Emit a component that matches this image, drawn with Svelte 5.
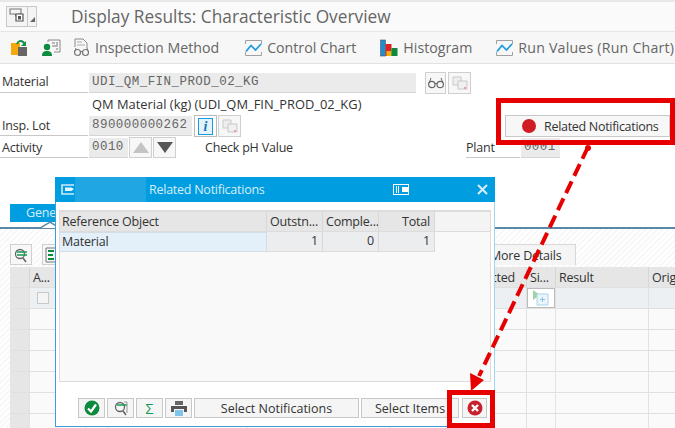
<script lang="ts">
  const columns = [
    { label: "", w: 20 },
    { label: "A...", w: 28 },
    { label: "", w: 28 },
    { label: "", w: 22 },
    { label: "", w: 140 },
    { label: "", w: 142 },
    { label: "Expected", w: 137, right: true },
    { label: "Si...", w: 29 },
    { label: "Result", w: 93 },
    { label: "Original", w: 60 }
  ];
  const rows = [0, 1, 2, 3, 4, 5, 6];
</script>

{#snippet chart()}
  <svg class="ico" width="17" height="16" viewBox="0 0 17 16" aria-hidden="true">
    <path d="M0.5 4V0.5h16V4M0.5 12v3.5h16V12" fill="none" stroke="#a0a0a0" />
    <path d="M1 11.5l5-6 4.5 4.5 5.5-6" fill="none" stroke="#1a9be0" stroke-width="1.7" />
  </svg>
{/snippet}

{#snippet copyIcon()}
  <svg width="18" height="16" viewBox="0 0 18 16" aria-hidden="true">
    <path d="M2 2h8v8H2z" fill="#eee" stroke="#c9c9c9" />
    <path d="M7 6h9v8H7z" fill="#f0f0f0" stroke="#c9c9c9" />
    <path d="M13 12h2v2h-2z" fill="#e8a0a0" />
  </svg>
{/snippet}

<div class="page">
  <header class="titlebar">
    <button class="menu-btn" type="button" aria-label="Menu">
      <svg width="29" height="19" viewBox="0 0 29 19" aria-hidden="true">
        <path d="M3 2h11v5h-3l-2 2-1-2H3z" fill="none" stroke="#777" stroke-width="1.1" />
        <path d="M9 7h7v7H9z" fill="#fff" stroke="#555" stroke-width="1.2" />
        <rect x="11" y="9" width="3" height="3.5" fill="#555" />
        <path d="M20.5 0v19" stroke="#c8c8c8" />
        <path d="M28 15v-5l-5 5z" fill="#666" />
      </svg>
    </button>
    <h1>Display Results: Characteristic Overview</h1>
  </header>

  <nav class="toolbar">
    <span class="tool first">
      <svg width="18" height="18" viewBox="0 0 18 18" aria-hidden="true">
        <rect x="1" y="4" width="9" height="12" fill="#f4a80c" />
        <rect x="8" y="8" width="9" height="9" fill="#666" />
        <path d="M7 5c1-3 4-4 6-2l2 2" fill="none" stroke="#12924a" stroke-width="2" />
        <path d="M16 2v5h-5z" fill="#12924a" />
      </svg>
    </span>
    <span class="tool second">
      <svg width="20" height="18" viewBox="0 0 20 18" aria-hidden="true">
        <circle cx="6" cy="8" r="3.2" fill="#0c8a3e" />
        <path d="M1 17c0-4 2-5 5-5s5 1 5 5z" fill="#0c8a3e" />
        <path d="M7 3V1h12v12h-6" fill="none" stroke="#888" />
        <path d="M11 4h3M11 7h6M15 10h2M16 3v3" stroke="#777" fill="none" />
      </svg>
    </span>
    <span class="tool method">
      <svg class="ico" width="17" height="19" viewBox="0 0 17 19" aria-hidden="true">
        <path d="M2 9V1h8l4 4v5" fill="none" stroke="#8a8a8a" />
        <path d="M4 4h5M4 7h8" stroke="#aaa" />
        <circle cx="4.5" cy="14.5" r="3" fill="none" stroke="#777" stroke-width="1.2" />
        <circle cx="12.5" cy="14.5" r="3" fill="none" stroke="#777" stroke-width="1.2" />
        <path d="M7 13.5h3M2 13l1-3M15 13l-1-3" stroke="#777" />
      </svg>
      Inspection Method
    </span>
    <span class="tool control">{@render chart()}Control Chart</span>
    <span class="tool histogram">
      <svg class="ico" width="18" height="18" viewBox="0 0 18 18" aria-hidden="true">
        <rect x="0.5" y="1" width="5" height="16" fill="#1a8fd8" stroke="#555" stroke-width="0.6" />
        <rect x="5.5" y="5" width="6" height="12" fill="#d22" />
        <rect x="6.5" y="12" width="5" height="5" fill="#f0b010" />
        <rect x="11.5" y="9" width="6" height="8" fill="#0f8a3c" />
      </svg>
      Histogram
    </span>
    <span class="tool run">{@render chart()}Run Values (Run Chart)</span>
  </nav>

  <section class="form">
    <div class="row material">
      <span class="label">Material</span>
      <span class="field wide">UDI_QM_FIN_PROD_02_KG</span>
      <button class="icon-btn glasses" type="button" aria-label="Display">
        <svg width="16" height="12" viewBox="0 0 16 12" aria-hidden="true">
          <circle cx="3.8" cy="7.5" r="3.2" fill="none" stroke="#666" stroke-width="1.2" />
          <circle cx="12.2" cy="7.5" r="3.2" fill="none" stroke="#666" stroke-width="1.2" />
          <path d="M7 6.5h2M1 6l2-5M15 6l-2-5" stroke="#666" fill="none" />
        </svg>
      </button>
      <button class="icon-btn" type="button" aria-label="Copy">{@render copyIcon()}</button>
    </div>

    <div class="description">QM Material (kg) (UDI_QM_FIN_PROD_02_KG)</div>

    <div class="row lot">
      <span class="label">Insp. Lot</span>
      <span class="field lot-field">890000000262</span>
      <button class="icon-btn info" type="button" aria-label="Info"><i>i</i></button>
      <button class="icon-btn" type="button" aria-label="Copy">{@render copyIcon()}</button>
      <button class="related" type="button"><span class="dot"></span>Related Notifications</button>
    </div>

    <div class="row activity">
      <span class="label">Activity</span>
      <span class="field act-field">0010</span>
      <button class="icon-btn arrow" type="button" aria-label="Previous"><span class="up"></span></button>
      <button class="icon-btn arrow" type="button" aria-label="Next"><span class="down"></span></button>
      <span class="activity-text">Check pH Value</span>
      <span class="label plant">Plant</span>
      <span class="field plant-field">0001</span>
    </div>
  </section>

  <div class="tabs">
    <span class="tab-active">General</span>
    <svg class="tab-notch" width="20" height="8" viewBox="0 0 20 8" aria-hidden="true">
      <path d="M0 7L10 1l10 6" fill="#fff" stroke="#5a88ab" stroke-width="1.5" />
    </svg>
  </div>

  <div class="tab-area">
    <div class="tab-tools">
      <button class="icon-btn small" type="button" aria-label="Find">
        <svg width="16" height="16" viewBox="0 0 16 16" aria-hidden="true">
          <circle cx="7" cy="7" r="4.5" fill="none" stroke="#666" stroke-width="1.3" />
          <path d="M10 11l3 4" stroke="#666" stroke-width="1.5" />
          <path d="M4 5h10M4 8h10" stroke="#0f9a50" stroke-width="1.5" />
        </svg>
      </button>
      <button class="icon-btn small second-tool" type="button" aria-label="Layout">
        <svg width="16" height="16" viewBox="0 0 16 16" aria-hidden="true">
          <path d="M1 1h14v14H1z" fill="none" stroke="#777" />
          <path d="M3 4h6M3 8h5M3 12h6" stroke="#0f8a3c" stroke-width="2" />
        </svg>
      </button>
      <span class="tab-more">More Details</span>
    </div>

    <div class="grid">
      <div class="grid-row head">
        {#each columns as c}
          <div class="cell" class:right={c.right} style="width:{c.w}px">{c.label}</div>
        {/each}
      </div>
      {#each rows as r}
        <div class="grid-row" class:first-row={r === 0}>
          {#each columns as c, i}
            <div class="cell" class:rowhead={i === 0} style="width:{c.w}px">
              {#if r === 0 && i === 1}<span class="check"></span>{/if}
              {#if r === 0 && i === 7}
                <span class="expand">
                  <svg width="18" height="16" viewBox="0 0 18 16" aria-hidden="true">
                    <path d="M1 0l7 5-7 5z" fill="#9ed5a8" />
                    <path d="M5 4h11v11H5z" fill="#eaf5fb" stroke="#a8d4ea" />
                    <path d="M10.5 7v5M8 9.5h5" stroke="#8cc4e4" />
                  </svg>
                </span>
              {/if}
            </div>
          {/each}
        </div>
      {/each}
    </div>
  </div>
</div>

<div class="dialog">
  <div class="dialog-title">
    <svg class="dialog-menu" width="14" height="11" viewBox="0 0 14 11" aria-hidden="true">
      <path d="M13 1H1v9h12" fill="none" stroke="#cfe9f8" stroke-width="1.6" />
      <path d="M4 3.5h6.500l2.500 1.500-2.500 2H4z" fill="#e8f5fc" />
    </svg>
    <span class="dialog-stripe"></span>
    <span class="dialog-name">Related Notifications</span>
    <svg class="dialog-resize" width="16" height="11" viewBox="0 0 16 11" aria-hidden="true">
      <rect x="0.5" y="0.5" width="15" height="10" fill="none" stroke="#fff" />
      <rect x="3" y="2" width="1" height="7" fill="#fff" />
      <rect x="5" y="2" width="1" height="7" fill="#fff" />
      <rect x="9" y="3" width="6" height="5" fill="#fff" />
    </svg>
    <svg class="dialog-close" width="11" height="11" viewBox="0 0 11 11" aria-hidden="true">
      <path d="M1 1l9 9M10 1l-9 9" stroke="#d8eefa" stroke-width="2" />
    </svg>
  </div>

  <div class="dialog-body">
    <div class="alv">
      <div class="alv-row alv-head">
        <div class="c ref">Reference Object</div>
        <div class="c out">Outstn...</div>
        <div class="c cmp">Comple...</div>
        <div class="c tot">Total</div>
        <div class="c rest"></div>
      </div>
      <div class="alv-row">
        <div class="c ref sel">Material</div>
        <div class="c out num">1</div>
        <div class="c cmp num">0</div>
        <div class="c tot num">1</div>
      </div>
    </div>

    <div class="dialog-actions">
      <button class="act square" type="button" aria-label="OK">
        <svg width="16" height="16" viewBox="0 0 16 16" aria-hidden="true">
          <circle cx="8" cy="8" r="7.5" fill="#0c8a3e" />
          <path d="M4 8.5l3 3 5-7" fill="none" stroke="#fff" stroke-width="2.2" />
        </svg>
      </button>
      <button class="act square" type="button" aria-label="Find">
        <svg width="16" height="16" viewBox="0 0 16 16" aria-hidden="true">
          <circle cx="7" cy="7" r="4.5" fill="none" stroke="#666" stroke-width="1.3" />
          <path d="M10 11l3 4" stroke="#666" stroke-width="1.5" />
          <path d="M4 5h10" stroke="#0f9a50" stroke-width="1.5" />
          <path d="M11 2h3v11" fill="none" stroke="#999" />
        </svg>
      </button>
      <button class="act square sigma" type="button">Σ</button>
      <button class="act square" type="button" aria-label="Print">
        <svg width="16" height="15" viewBox="0 0 16 15" aria-hidden="true">
          <path d="M4 0h8v4H4z" fill="#666" />
          <path d="M0 5h16v6h-3V8H3v3H0z" fill="#555" />
          <path d="M4 9h8v6H4z" fill="#7fc4ea" />
        </svg>
      </button>
      <button class="act notif" type="button">Select Notifications</button>
      <button class="act items" type="button">Select Items</button>
      <button class="act square cancel" type="button" aria-label="Cancel">
        <svg width="16" height="16" viewBox="0 0 16 16" aria-hidden="true">
          <circle cx="8" cy="8" r="7.5" fill="#c8202c" />
          <path d="M5 5l6 6M11 5l-6 6" stroke="#fff" stroke-width="2.4" />
        </svg>
      </button>
    </div>
  </div>
</div>

<svg class="callouts" width="675" height="428" viewBox="0 0 675 428" aria-hidden="true">
  <rect x="498.5" y="100.5" width="174" height="42" fill="none" stroke="#e60000" stroke-width="5" />
  <rect x="449.5" y="392.5" width="43" height="33" fill="none" stroke="#e60000" stroke-width="5" />
  <path d="M588 147L479 376" fill="none" stroke="#e60000" stroke-width="4" stroke-dasharray="13 6" />
  <circle cx="588" cy="148" r="3" fill="#e60000" />
  <path d="M471 391l-1-18 14 7z" fill="#e60000" />
</svg>

<style>
  :global(body) {
    background: #fff;
    overflow: hidden;
    font-family: "Open Sans", "Noto Sans", sans-serif;
    color: #333;
  }

  button {
    font: inherit;
    color: inherit;
    padding: 0;
    cursor: default;
  }

  .page {
    width: 675px;
    height: 428px;
    overflow: hidden;
    position: relative;
    letter-spacing: -0.2px;
  }

  .titlebar {
    display: flex;
    align-items: center;
    height: 29px;
    margin-top: 2px;
    padding-left: 6px;
    background: #fafafa;
    border-bottom: 1px solid #e6e6e6;
    box-shadow: 0 -2px 0 #e8e8e8;
  }

  .menu-btn {
    display: flex;
    align-items: center;
    justify-content: center;
    width: 31px;
    height: 21px;
    background: #f4f4f4;
    border: 1px solid #c8c8c8;
  }

  h1 {
    margin: 0 0 0 34px;
    font-size: 17.3px;
    font-weight: 400;
    letter-spacing: 0;
    color: #666;
    white-space: nowrap;
  }

  .toolbar {
    display: flex;
    align-items: center;
    height: 31px;
    padding-left: 10px;
    background: #f7f7f7;
    border-bottom: 1px solid #e2e2e2;
    font-size: 14.2px;
    letter-spacing: 0;
    color: #666;
    white-space: nowrap;
  }

  .tool {
    display: flex;
    align-items: center;
  }

  .ico {
    margin-right: 5px;
    flex: none;
  }

  .second { margin-left: 13px; }
  .method { margin-left: 12px; }
  .control { margin-left: 26px; }
  .histogram { margin-left: 24px; }
  .run { margin-left: 24px; letter-spacing: 0.2px; }

  .form {
    padding-top: 8px;
    font-size: 12.5px;
    color: #333;
  }

  .row {
    display: flex;
    align-items: center;
    position: relative;
  }

  .label {
    box-sizing: border-box;
    width: 88px;
    height: 20px;
    padding-left: 2px;
    line-height: 19px;
    border-bottom: 1px solid #c8c8c8;
    margin-right: 1px;
  }

  .material .label { line-height: 18px; }

  .field {
    box-sizing: border-box;
    height: 20px;
    line-height: 18px;
    padding-left: 3px;
    background: #ebebeb;
    border-bottom: 1px solid #d4d4d4;
    font-family: "Liberation Mono", monospace;
    font-size: 12.5px;
    color: #666;
    letter-spacing: 0.45px;
  }

  .wide { width: 327px; margin-right: 9px; }
  .lot-field { width: 103px; margin-right: 2px; }
  .act-field { width: 39px; margin-right: 1px; }

  .icon-btn {
    box-sizing: border-box;
    display: flex;
    align-items: center;
    justify-content: center;
    width: 23px;
    height: 22px;
    background: #f7f7f7;
    border: 1px solid #cfcfcf;
  }

  .icon-btn + .icon-btn { margin-left: 1px; }
  .glasses { width: 21px; margin-right: 1px; }

  .info {
    background: #fff;
    border-color: #bbb;
  }

  .info i {
    display: block;
    width: 13px;
    height: 15px;
    text-align: center;
    background: #e3f2fb;
    border: 1px solid #1a9be0;
    color: #1176b8;
    font: italic 700 14px/15px "Liberation Serif", serif;
  }

  .description {
    height: 21px;
    line-height: 20px;
    padding-left: 92px;
    font-size: 12.9px;
    letter-spacing: 0;
  }

  .related {
    display: flex;
    align-items: center;
    box-sizing: border-box;
    width: 165px;
    height: 22px;
    margin-left: 264px;
    padding-left: 16px;
    background: #f7f7f7;
    border: 1px solid #c8c8c8;
    font-size: 12.5px;
    letter-spacing: -0.3px;
  }

  .dot {
    width: 14px;
    height: 14px;
    margin-right: 8px;
    border-radius: 50%;
    background: #cf1c22;
  }

  .arrow { width: 23px; height: 21px; }
  .arrow + .arrow { margin-left: 1px; }

  .up, .down {
    width: 0;
    height: 0;
    border-left: 8px solid transparent;
    border-right: 8px solid transparent;
  }

  .up { border-bottom: 11px solid #c4c4c4; }
  .down { border-top: 11px solid #555; }

  .activity-text { margin-left: 29px; }
  .plant { width: 54px; margin-left: 173px; padding-left: 0; }
  .plant-field { width: 39px; }

  .tabs {
    position: relative;
    height: 23px;
    margin-top: 46px;
    padding-left: 10px;
    border-bottom: 2px solid #5a88ab;
  }

  .tab-active {
    display: block;
    box-sizing: border-box;
    width: 45px;
    height: 18px;
    padding-left: 16px;
    line-height: 17px;
    background: #009de0;
    color: #d6eefa;
    font-size: 12.5px;
    white-space: nowrap;
    overflow: hidden;
  }

  .tab-notch {
    position: absolute;
    left: 40px;
    bottom: -2px;
  }

  .tab-area {
    background: repeating-linear-gradient(135deg, #f8f8f8 0 2px, #fff 2px 4px);
    padding-top: 15px;
    height: 200px;
  }

  .tab-tools {
    position: relative;
    display: flex;
    height: 23px;
    padding-left: 10px;
    align-items: flex-start;
  }

  .small { width: 22px; height: 21px; }
  .second-tool { margin-left: 10px !important; }

  .tab-more {
    position: absolute;
    right: 99px;
    top: 0;
    box-sizing: border-box;
    width: 120px;
    height: 21px;
    line-height: 21px;
    padding-left: 33px;
    background: #f5f5f5;
    border: 1px solid #d8d8d8;
    border-bottom: 0;
    font-size: 12.5px;
  }

  .grid {
    margin-left: 10px;
    background: #fafafa;
  }

  .grid-row {
    display: flex;
    height: 21px;
    border-bottom: 1px solid #e0e0e0;
    box-sizing: border-box;
  }

  .cell {
    flex: none;
    box-sizing: border-box;
    height: 100%;
    padding-left: 3px;
    border-right: 1px solid #e2e2e2;
    font-size: 12.5px;
    line-height: 20px;
    white-space: nowrap;
    overflow: hidden;
    position: relative;
  }

  .head { background: #e6e6e6; }
  .head .cell { border-right-color: #d6d6d6; line-height: 21px; }
  .right { text-align: right; padding-right: 11px; }
  .first-row { background: #edf0f3; }
  .rowhead { background: #e6e6e6; }

  .check {
    display: block;
    width: 10px;
    height: 10px;
    margin: 4px 0 0 4px;
    background: #f4f4f4;
    border: 1px solid #c8c8c8;
  }

  .expand {
    position: absolute;
    left: 0;
    top: 0;
    box-sizing: border-box;
    display: flex;
    align-items: center;
    justify-content: center;
    width: 28px;
    height: 20px;
    background: #fff;
    border: 1px solid #bbb;
  }

  /* modal window floating over the screen */
  .dialog {
    position: absolute;
    left: 55px;
    top: 177px;
    box-sizing: border-box;
    width: 440px;
    height: 250px;
    background: #fff;
    border: 1px solid #3a9fd6;
    border-right-color: #9fd6f0;
    border-top: 0;
    display: flex;
    flex-direction: column;
    letter-spacing: -0.2px;
  }

  .dialog-title {
    display: flex;
    align-items: center;
    flex: none;
    height: 25px;
    margin: 0 -1px;
    background: #009de0;
    color: #d6eefa;
    font-size: 12.5px;
    letter-spacing: -0.25px;
  }

  .dialog-menu { margin-left: 6px; }

  .dialog-stripe {
    width: 71px;
    height: 25px;
    background: #20a6e2;
  }

  .dialog-name { margin-left: 3px; }
  .dialog-resize { margin-left: 128px; }
  .dialog-close { margin-left: 68px; }

  .dialog-body {
    flex: 1;
    display: flex;
    flex-direction: column;
    padding: 8px 3px;
  }

  .alv {
    box-sizing: border-box;
    height: 172px;
    margin-bottom: 16px;
    background: #f9f9f9;
    border: 1px solid #dcdcdc;
    border-top-width: 2px;
    font-size: 12.5px;
  }

  .alv-row {
    display: flex;
    height: 20px;
    line-height: 18px;
  }

  .alv-head {
    background: #e6e6e6;
    line-height: 20px;
  }

  .c {
    box-sizing: border-box;
    padding: 0 3px;
    border-right: 1px solid #d8d8d8;
    border-bottom: 1px solid #dcdcdc;
    white-space: nowrap;
    overflow: hidden;
  }

  .ref { width: 207px; padding-left: 2px; }
  .out { width: 56px; background: #ebedef; }
  .cmp { width: 56px; background: #ebedef; }
  .tot { width: 56px; background: #ebedef; text-align: right; padding-right: 4px; }
  .alv-head .out, .alv-head .cmp, .alv-head .tot { background: #e6e6e6; }
  .alv-head .rest { flex: 1; background: #f4f4f4; border-right: 0; }
  .sel { background: #e3f0f9; border: 1px solid #d4dde4; border-left: 0; }
  .num { text-align: right; padding-right: 4px; }

  .dialog-actions {
    display: flex;
    height: 20px;
    padding-left: 19px;
    font-size: 12.5px;
  }

  .act {
    box-sizing: border-box;
    height: 20px;
    background: #f5f5f5;
    border: 1px solid #c8c8c8;
    margin-right: 2px;
    display: flex;
    align-items: center;
    justify-content: center;
  }

  .square { width: 27px; }
  .sigma { color: #0f9a50; font-size: 14px; }
  .notif { width: 165px; }
  .items { width: 98px; margin-right: 3px; }
  .cancel { width: 25px; }

  /* annotation drawn on top of the screenshot */
  .callouts {
    position: absolute;
    left: 0;
    top: 0;
    pointer-events: none;
  }
</style>
